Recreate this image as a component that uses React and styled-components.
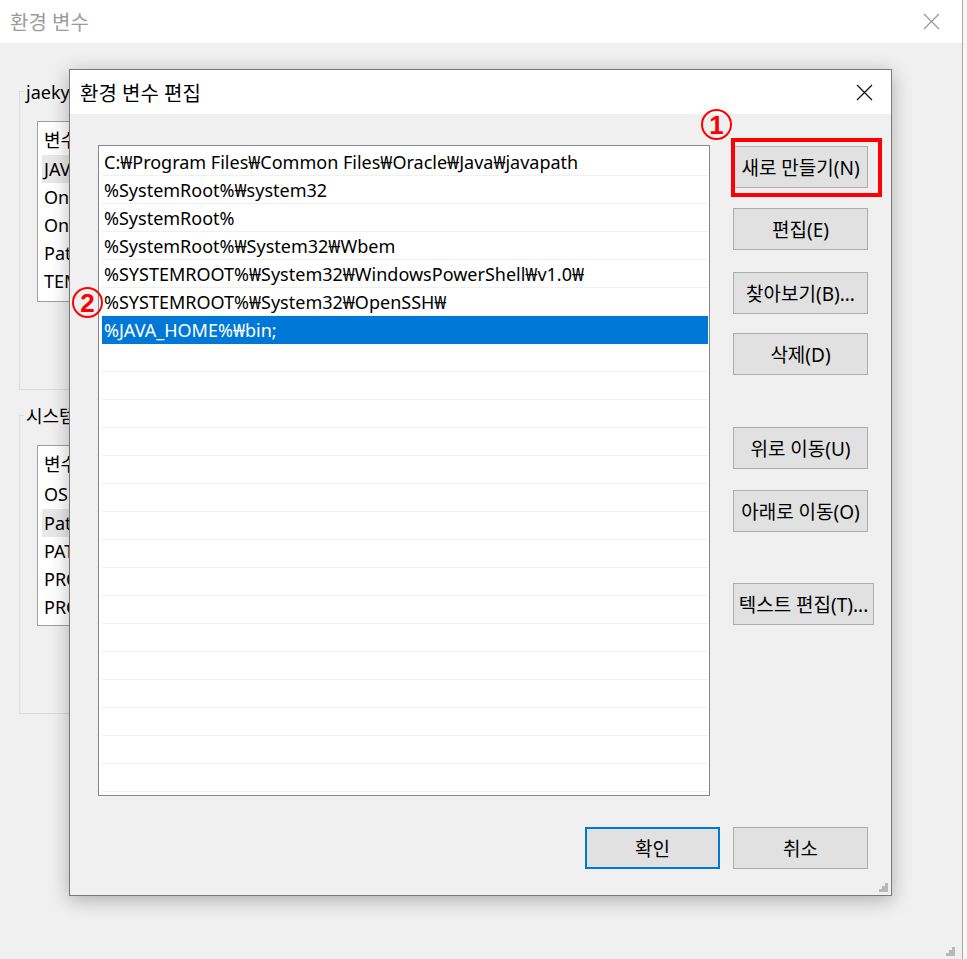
import React from "react";
import styled, { createGlobalStyle } from "styled-components";

const GlobalStyle = createGlobalStyle`
  html, body {
    margin: 0;
    padding: 0;
    background: #f7f7f7;
  }
  * {
    box-sizing: border-box;
  }
`;

const FONT = `"Noto Sans", "Noto Sans CJK KR", sans-serif`;

const pathEntries = [
  "C:₩Program Files₩Common Files₩Oracle₩Java₩javapath",
  "%SystemRoot%₩system32",
  "%SystemRoot%",
  "%SystemRoot%₩System32₩Wbem",
  "%SYSTEMROOT%₩System32₩WindowsPowerShell₩v1.0₩",
  "%SYSTEMROOT%₩System32₩OpenSSH₩",
  "%JAVA_HOME%₩bin;",
];

const userVars = ["JAVA_HOME", "OneDrive", "OneDriveConsumer", "Path", "TEMP"];
const systemVars = ["OS", "Path", "PATHEXT", "PROCESSOR_ARCHITECTURE", "PROCESSOR_IDENTIFIER"];

const sideButtons = [
  { label: "새로 만들기(N)", gap: 0 },
  { label: "편집(E)", gap: 20 },
  { label: "찾아보기(B)...", gap: 22 },
  { label: "삭제(D)", gap: 19 },
  { label: "위로 이동(U)", gap: 52 },
  { label: "아래로 이동(O)", gap: 21 },
  { label: "텍스트 편집(T)...", gap: 51, wide: true },
];

const CloseIcon = ({ color }) => (
  <svg width="17" height="17" viewBox="0 0 17 17">
    <path d="M1 1 L16 16 M16 1 L1 16" stroke={color} strokeWidth="1.3" fill="none" />
  </svg>
);

const Grip = () => (
  <svg width="12" height="12" viewBox="0 0 12 12">
    {[
      [9, 0],
      [6, 3], [9, 3],
      [3, 6], [6, 6], [9, 6],
    ].map(([x, y]) => (
      <rect key={`${x}-${y}`} x={x} y={y + 3} width="3" height="3" fill="#b8b8b8" />
    ))}
  </svg>
);

const App = () => {
  return (
    <>
      <GlobalStyle />
      <Desktop>
        <BackWindow>
          <TitleBar $height={43}>
            <Title $muted>환경 변수</Title>
            <CloseButton $right={22}>
              <CloseIcon color="#9a9a9a" />
            </CloseButton>
          </TitleBar>
          <BackBody>
            <GroupBox $height={312}>
              <Legend>jaekyung에 대한 사용자 변수(U)</Legend>
              <VarList>
                <VarRow $header>변수</VarRow>
                {userVars.map((v, i) => (
                  <VarRow key={v} $active={i === 0}>
                    {v}
                  </VarRow>
                ))}
              </VarList>
            </GroupBox>
            <GroupBox $height={312} $top={12}>
              <Legend>시스템 변수(S)</Legend>
              <VarList>
                <VarRow $header>변수</VarRow>
                {systemVars.map((v, i) => (
                  <VarRow key={v} $active={i === 1} $tall={i === 0}>
                    {v}
                  </VarRow>
                ))}
              </VarList>
            </GroupBox>
          </BackBody>
          <CornerGrip>
            <Grip />
          </CornerGrip>
        </BackWindow>

        <Dialog>
          <TitleBar $height={44}>
            <Title>환경 변수 편집</Title>
            <CloseButton $right={18}>
              <CloseIcon color="#111" />
            </CloseButton>
          </TitleBar>
          <DialogBody>
            <MainRow>
              <PathList>
                {pathEntries.map((p, i) => (
                  <PathRow key={p} $selected={i === pathEntries.length - 1}>
                    {p}
                  </PathRow>
                ))}
                {Array.from({ length: 16 }).map((_, i) => (
                  <PathRow key={`empty-${i}`} />
                ))}
              </PathList>
              <ButtonColumn>
                {sideButtons.map((b) => (
                  <WinButton key={b.label} $gap={b.gap} $wide={b.wide}>
                    {b.label}
                  </WinButton>
                ))}
              </ButtonColumn>
            </MainRow>
            <Footer>
              <WinButton $default>확인</WinButton>
              <WinButton>취소</WinButton>
            </Footer>
          </DialogBody>
          <CornerGrip $inset={3}>
            <Grip />
          </CornerGrip>
        </Dialog>

        <Highlight />
        <Badge $x={701} $y={109}>1</Badge>
        <Badge $x={72} $y={287}>2</Badge>
      </Desktop>
    </>
  );
};

const Desktop = styled.div`
  position: relative;
  width: 967px;
  height: 959px;
  overflow: hidden;
  font-family: ${FONT};
`;

const BackWindow = styled.div`
  position: relative;
  width: 963px;
  height: 959px;
  display: flex;
  flex-direction: column;
  background: #f0f0f0;
  border-right: 1px solid #a9a9a9;
`;

const TitleBar = styled.div`
  height: ${(p) => p.$height}px;
  flex-shrink: 0;
  display: flex;
  align-items: center;
  justify-content: space-between;
  padding-left: 10px;
  background: #ffffff;
`;

const Title = styled.div`
  font-size: 20px;
  color: ${(p) => (p.$muted ? "#9b9b9b" : "#000")};
`;

const CloseButton = styled.div`
  display: flex;
  margin-right: ${(p) => p.$right}px;
`;

const BackBody = styled.div`
  flex: 1;
  display: flex;
  flex-direction: column;
  padding: 35px 0 0 19px;
`;

const GroupBox = styled.fieldset`
  margin: ${(p) => p.$top || 0}px 0 0 0;
  width: 860px;
  height: ${(p) => p.$height}px;
  border: 1px solid #dcdcdc;
  padding: 0;
  min-width: 0;
`;

const Legend = styled.legend`
  font-size: 18px;
  color: #000;
  padding: 0 2px;
  margin-left: 4px;
`;

const VarList = styled.div`
  width: 600px;
  height: 181px;
  margin: 17px 0 0 17px;
  background: #fff;
  border: 1px solid #a0a0a0;
  padding: 1px 4px;
  display: flex;
  flex-direction: column;
`;

const VarRow = styled.div`
  height: ${(p) => (p.$header ? 32 : p.$tall ? 30 : 28)}px;
  display: flex;
  align-items: center;
  padding-left: 2px;
  font-size: 18px;
  color: #000;
  background: ${(p) => (p.$active ? "#e8e8e8" : "transparent")};
`;

const CornerGrip = styled.div`
  position: absolute;
  right: ${(p) => (p.$inset ? p.$inset : 7)}px;
  bottom: ${(p) => (p.$inset ? p.$inset : 3)}px;
  display: flex;
`;

const Dialog = styled.div`
  position: absolute;
  left: 69px;
  top: 69px;
  width: 823px;
  height: 827px;
  display: flex;
  flex-direction: column;
  background: #f0f0f0;
  border: 1px solid #7a7a7a;
  box-shadow: 0 4px 18px rgba(0, 0, 0, 0.28);
`;

const DialogBody = styled.div`
  flex: 1;
  display: flex;
  flex-direction: column;
  padding: 31px 0 0 28px;
`;

const MainRow = styled.div`
  display: flex;
  gap: 23px;
`;

const PathList = styled.div`
  width: 612px;
  height: 651px;
  background: #fff;
  border: 1px solid #828790;
  padding: 2px 1px 0 3px;
  overflow: hidden;
  display: flex;
  flex-direction: column;
`;

const PathRow = styled.div`
  height: 28px;
  flex-shrink: 0;
  display: flex;
  align-items: center;
  padding-left: 2px;
  font-size: 18px;
  white-space: nowrap;
  color: ${(p) => (p.$selected ? "#fff" : "#000")};
  background: ${(p) => (p.$selected ? "#0078d7" : "#fff")};
  border-bottom: 1px solid ${(p) => (p.$selected ? "#0078d7" : "#f0f0f0")};
`;

const ButtonColumn = styled.div`
  display: flex;
  flex-direction: column;
  align-items: flex-start;
  padding-top: 1px;
`;

const WinButton = styled.div`
  width: ${(p) => (p.$wide ? 141 : 135)}px;
  height: 42px;
  margin-top: ${(p) => p.$gap || 0}px;
  display: flex;
  align-items: center;
  justify-content: center;
  background: #e1e1e1;
  border: ${(p) => (p.$default ? "2px solid #0078d7" : "1px solid #adadad")};
  font-size: 19px;
  color: #000;
  white-space: nowrap;
  overflow: hidden;
`;

const Footer = styled.div`
  display: flex;
  justify-content: flex-end;
  gap: 13px;
  margin-top: 31px;
  padding-right: 23px;
`;

const Highlight = styled.div`
  position: absolute;
  left: 731px;
  top: 138px;
  width: 151px;
  height: 59px;
  border: 4px solid #ff0000;
`;

const Badge = styled.div`
  position: absolute;
  left: ${(p) => p.$x}px;
  top: ${(p) => p.$y}px;
  width: 31px;
  height: 31px;
  border: 2px solid #ff0000;
  border-radius: 50%;
  display: flex;
  align-items: center;
  justify-content: center;
  color: #ff0000;
  font-family: "Liberation Sans", sans-serif;
  font-weight: 700;
  font-size: 26px;
  line-height: 1;
`;

export default App;
